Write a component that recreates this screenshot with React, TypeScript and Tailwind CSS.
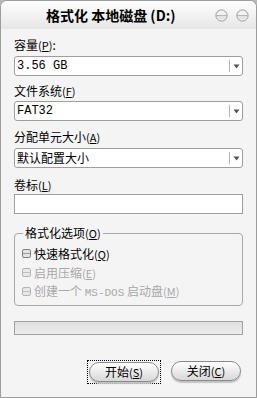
import React from "react";

const cjk = { fontFamily: '"Noto Sans CJK SC", "Noto Sans", sans-serif' };
const mono = { fontFamily: '"Liberation Mono", "Noto Sans CJK SC", monospace' };

function Key({ k }: { k: string }) {
  return (
    <span className="text-[11px]">
      (<span className="underline">{k}</span>)
    </span>
  );
}

function TitleButton() {
  return (
    <svg width="13" height="13" viewBox="0 0 13 13">
      <circle cx="6.5" cy="6.5" r="5.6" fill="#f2f2f2" stroke="#9a9a9a" strokeWidth="1" />
      <path d="M1.2 6.7 H11.8" stroke="#a8a8a8" strokeWidth="1" />
      <path d="M2 7.5 A5 5 0 0 0 11 7.5 Z" fill="#e2e2e2" />
    </svg>
  );
}

function Select({ value, isMono }: { value: string; isMono?: boolean }) {
  return (
    <div className="flex h-[20px] items-center rounded-[3px] border border-[#9e9e9e] bg-white">
      <span className="flex-1 pl-[2px] text-[12px] leading-[14px] text-black" style={isMono ? mono : cjk}>
        {value}
      </span>
      <div className="h-[12px] w-px bg-[#b4b4b4]" />
      <div className="flex w-[12px] justify-center">
        <svg width="7" height="5" viewBox="0 0 7 5">
          <path d="M0.5 0.5 H6.5 L3.5 4.5 Z" fill="#555" />
        </svg>
      </div>
    </div>
  );
}

function Check({ label, disabled, children }: { label: string; disabled?: boolean; children?: React.ReactNode }) {
  return (
    <div className={`flex h-[19px] items-center gap-[3px] ${disabled ? "text-[#a8a8a8]" : "text-black"}`}>
      <div
        className={`flex h-[9px] w-[9px] items-center justify-center rounded-[2px] border ${
          disabled ? "border-[#b4b4b4] bg-[#e8e8e8]" : "border-[#808080] bg-[#e4e4e4]"
        }`}
      >
        <div className={`h-px w-[7px] ${disabled ? "bg-[#c0c0c0]" : "bg-[#9a9a9a]"}`} />
      </div>
      <span className="text-[12px] leading-[14px]">
        {label}
        {children}
      </span>
    </div>
  );
}

export default function App() {
  return (
    <div className="h-[398px] w-[257px] bg-[#b8b8b8]" style={cjk}>
      <div className="flex h-full flex-col overflow-hidden rounded-t-[7px] border border-[#9c9c9c] bg-[#f4f4f4]">
        <div className="flex h-[28px] shrink-0 items-center bg-gradient-to-b from-[#fefefe] to-[#e6e6e6]">
          <span className="ml-[45px] text-[14px] font-bold leading-[16px] text-black">
            格式化 本地磁盘 (D:)
          </span>
          <div className="ml-auto mr-[7px] flex gap-[8px]">
            <TitleButton />
            <TitleButton />
          </div>
        </div>

        <div className="flex flex-col px-[13px]">
          <div className="mt-[9px] h-[14px] text-[12px] leading-[14px] text-black">
            容量<Key k="P" />:
          </div>
          <div className="mt-[4px]">
            <Select value="3.56 GB" isMono />
          </div>

          <div className="mt-[8px] h-[14px] text-[12px] leading-[14px] text-black">
            文件系统<Key k="F" />
          </div>
          <div className="mt-[3px]">
            <Select value="FAT32" isMono />
          </div>

          <div className="mt-[9px] h-[14px] text-[12px] leading-[14px] text-black">
            分配单元大小<Key k="A" />
          </div>
          <div className="mt-[4px]">
            <Select value="默认配置大小" />
          </div>

          <div className="mt-[10px] h-[14px] text-[12px] leading-[14px] text-black">
            卷标<Key k="L" />
          </div>
          <div className="mt-[2px] h-[20px] border border-[#9e9e9e] bg-white" />

          <fieldset className="mt-[12px] h-[80px] rounded-[4px] border border-[#a8a8a8] pl-[7px] pr-2">
            <legend className="ml-[1px] px-[2px] text-[12px] leading-[14px] text-black">
              格式化选项<Key k="O" />
            </legend>
            <div className="mt-[4px] flex flex-col">
              <Check label="快速格式化">
                <Key k="Q" />
              </Check>
              <Check label="启用压缩" disabled>
                <Key k="E" />
              </Check>
              <Check label="创建一个 " disabled>
                <span className="text-[11px]" style={mono}>MS-DOS</span> 启动盘<Key k="M" />
              </Check>
            </div>
          </fieldset>

          <div className="mt-[15px] h-[14px] border border-[#a0a0a0] bg-gradient-to-b from-[#e0e0e0] to-[#ececec]" />

          <div className="mt-[25px] flex justify-end gap-[9px] pr-[1px]">
            <div className="border border-dotted border-black p-px">
              <button className="flex h-[20px] w-[70px] items-center justify-center rounded-full border border-[#8a8a8a] bg-gradient-to-b from-white to-[#d8d8d8] text-[12px] text-black shadow-[0_2px_1px_#c4c4c4]">
                开始<Key k="S" />
              </button>
            </div>
            <div className="p-px">
              <button className="flex h-[20px] w-[70px] items-center justify-center rounded-full border border-[#8a8a8a] bg-gradient-to-b from-white to-[#d8d8d8] text-[12px] text-black shadow-[0_2px_1px_#c4c4c4]">
                关闭<Key k="C" />
              </button>
            </div>
          </div>
        </div>
      </div>
    </div>
  );
}
